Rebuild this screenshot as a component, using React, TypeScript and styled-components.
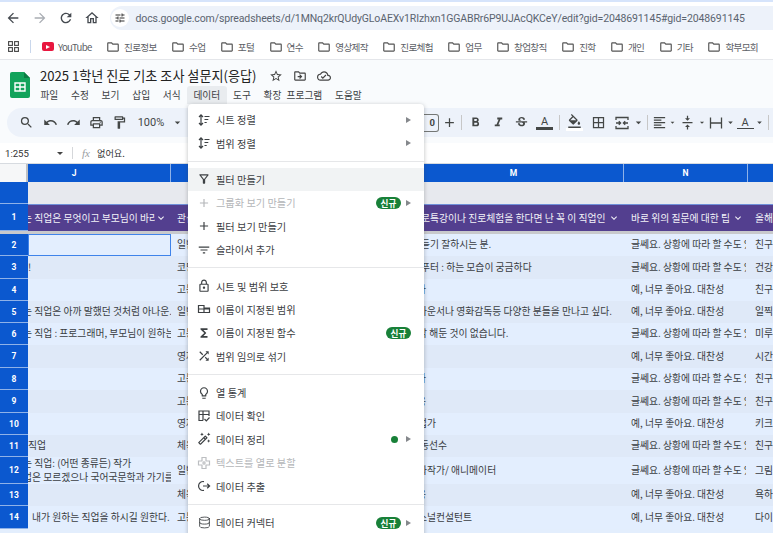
import React from 'react';
import styled, { createGlobalStyle } from 'styled-components';
import {
  MdArrowBack, MdArrowForward, MdRefresh, MdOutlineHome, MdOutlineFolder, MdStarBorder, MdOutlineDriveFileMove,
  MdOutlineCloudDone, MdSearch, MdUndo, MdRedo, MdOutlineLocalPrintshop, MdOutlineFormatPaint, MdAdd, MdFormatBold,
  MdFormatItalic, MdStrikethroughS, MdOutlineFormatColorFill, MdBorderAll, MdFormatAlignLeft,
  MdVerticalAlignCenter, MdOutlineFilterAlt, MdFilterList, MdOutlineLock, MdFunctions, MdShuffle, MdOutlineLightbulb,
  MdOutlineAutoFixHigh, MdKeyboardArrowDown, MdOutlineTune, MdArrowDropDown,
} from 'react-icons/md';
import { Database } from 'lucide-react';

const FONT = `"Noto Sans CJK KR", "Noto Sans", sans-serif`;

const GlobalStyle = createGlobalStyle`
  html, body { margin: 0; padding: 0; background: #fff; }
  body { font-family: ${FONT}; }
`;

const Page = styled.div`
  position: relative;
  display: flex;
  flex-direction: column;
  width: 773px;
  height: 533px;
  overflow: hidden;
  background: #fff;
`;

/* browser chrome */
const TabStrip = styled.div`
  flex: none;
  height: 2px;
  background: #d6e4fb;
`;

const AddressRow = styled.div`
  display: flex;
  flex: none;
  align-items: center;
  height: 32px;
`;

const NavButton = styled.div<{ $dim?: boolean }>`
  display: flex;
  flex: none;
  align-items: center;
  justify-content: center;
  width: 26.4px;
  font-size: 16px;
  color: ${p => (p.$dim ? '#a9adb3' : '#454a50')};
`;

const AddressBar = styled.div`
  display: flex;
  align-items: center;
  flex: 1;
  min-width: 0;
  height: 24px;
  margin-left: 4px;
  border-radius: 12px 0 0 12px;
  background: #edf2fa;
`;

const SiteChip = styled.div`
  display: flex;
  flex: none;
  align-items: center;
  justify-content: center;
  width: 18px;
  height: 18px;
  margin: 0 7px 0 1px;
  border-radius: 50%;
  background: #fff;
  font-size: 12px;
  color: #333;
`;

const Url = styled.div`
  font: 10.5px "Roboto", sans-serif;
  letter-spacing: -0.12px;
  color: #5b6470;
  white-space: nowrap;
`;

const BookmarkBar = styled.div`
  display: flex;
  flex: none;
  align-items: center;
  box-sizing: border-box;
  height: 26px;
  padding-left: 8px;
  border-bottom: 1px solid #e4e6ea;
`;

const AppsIcon = styled.svg`
  flex: none;
  width: 11px;
  height: 11px;
  margin-right: 11px;
`;

const BarDivider = styled.div`
  flex: none;
  width: 1px;
  height: 13px;
  margin-right: 11px;
  background: #c9d7ec;
`;

const Bookmark = styled.div`
  display: flex;
  flex: none;
  align-items: center;
  gap: 4px;
  margin-right: 14.5px;
  font-size: 9.6px;
  letter-spacing: -0.7px;
  color: #5c6066;
  white-space: nowrap;

  svg { font-size: 14px; color: #555; }
`;

const YouTubeBadge = styled.div`
  display: flex;
  align-items: center;
  justify-content: center;
  width: 12px;
  height: 9px;
  border-radius: 2px;
  background: #e8173f;

  &::after {
    content: '';
    border-left: 4px solid #fff;
    border-top: 2.5px solid transparent;
    border-bottom: 2.5px solid transparent;
  }
`;

/* sheets header */
const DocHeader = styled.div`
  display: flex;
  flex: none;
  flex-direction: column;
  background: #f9fbfd;
`;

const TitleArea = styled.div`
  display: flex;
  box-sizing: border-box;
  height: 44px;
  padding: 5px 0 0 10px;
`;

const SheetLogo = styled.svg`
  flex: none;
  width: 20px;
  height: 26px;
  margin: 7px 10px 0 0;
`;

const TitleStack = styled.div`
  display: flex;
  flex-direction: column;
`;

const TitleRow = styled.div`
  display: flex;
  align-items: center;
  height: 21px;
`;

const Title = styled.div`
  width: 229px;
  font-size: 13.1px;
  line-height: 20px;
  color: #222;
  white-space: nowrap;
`;

const TitleIcons = styled.div`
  display: flex;
  gap: 10px;
  font-size: 14px;
  color: #444;
  svg { display: block; }
`;

const MenuBar = styled.div`
  display: flex;
  height: 18px;
  margin-left: -6px;
`;

const MenuLabel = styled.div<{ $open?: boolean }>`
  padding: 0 6.4px;
  border-radius: 3px 3px 0 0;
  font-size: 9.7px;
  line-height: 18px;
  word-spacing: 3px;
  color: #3c4043;
  white-space: nowrap;
  background: ${p => (p.$open ? '#e9ecef' : 'transparent')};
`;

const ToolbarWrap = styled.div`
  padding: 4px 0 6px 7px;
`;

const Toolbar = styled.div`
  display: flex;
  align-items: center;
  height: 29px;
  padding-left: 7px;
  border-radius: 15px 0 0 15px;
  background: #edf2fa;
  color: #444746;
`;

const Tool = styled.div<{ $w?: number }>`
  display: flex;
  flex: none;
  align-items: center;
  justify-content: center;
  width: ${p => p.$w ?? 23}px;
  height: 22px;
  font-size: 15px;
`;

const ToolText = styled(Tool)`
  font: 11px "Roboto", sans-serif;
`;

const Caret = styled(Tool)`
  width: ${p => p.$w ?? 13}px;
  font-size: 13px;
`;

const ToolSep = styled.div<{ $mx?: number }>`
  flex: none;
  width: 1px;
  height: 15px;
  margin: 0 ${p => p.$mx ?? 3}px;
  background: #c7c7c7;
`;

const HiddenStretch = styled.div`
  flex: none;
  width: 237px;
`;

const FontSizeBox = styled.div`
  display: flex;
  flex: none;
  align-items: center;
  justify-content: flex-end;
  width: 14px;
  height: 16px;
  padding-right: 3px;
  border: 1px solid #747775;
  border-left: 0;
  border-radius: 0 3px 3px 0;
  font: bold 9.5px "Roboto", sans-serif;
`;

const ColorTool = styled(Tool)`
  flex-direction: column;
`;

const ColorBar = styled.div<{ $c: string; $h?: number }>`
  width: 17px;
  height: ${p => p.$h ?? 3}px;
  margin-top: -1px;
  background: ${p => p.$c};
`;

const LetterA = styled.div`
  font: 11px/12px "Roboto", sans-serif;
`;

/* formula bar */
const FormulaBar = styled.div`
  display: flex;
  flex: none;
  align-items: center;
  box-sizing: border-box;
  height: 21px;
  background: #fff;
  border-bottom: 1px solid #d7dbe0;
  font-size: 9.2px;
  color: #333;
`;

const NameBox = styled.div`
  display: flex;
  align-items: center;
  justify-content: space-between;
  box-sizing: border-box;
  width: 72px;
  padding: 0 9px 0 5px;
  font: 9.6px "Roboto", sans-serif;
`;

const NameCaret = styled.div`
  border-top: 3px solid #444;
  border-left: 3px solid transparent;
  border-right: 3px solid transparent;
`;

const FormulaDivider = styled.div`
  width: 1px;
  height: 12px;
  background: #d5d7da;
`;

const Fx = styled.div`
  margin: 0 7px 0 9px;
  font: italic 11px "Liberation Serif", serif;
  color: #9a9da1;
`;

/* grid */
const Sheet = styled.div`
  display: flex;
  flex: 1;
  flex-direction: column;
  min-height: 0;
  background: #e3eefd;
`;

const COLS = '28px 143px 117px 116px 220px 124px 120px';

const SheetRow = styled.div<{ $h: number; $even?: boolean }>`
  display: grid;
  flex: none;
  grid-template-columns: ${COLS};
  height: ${p => p.$h}px;
  background: ${p => (p.$even ? '#dfe9f8' : '#e3eefe')};
`;

const Corner = styled.div`
  box-sizing: border-box;
  background: #f6f7f8;
  border-right: 2px solid #bfc1c4;
`;

// J is scrolled partly under the frozen row headers, so its letter sits left of the visible centre
const ColHead = styled.div<{ $scrolled?: number }>`
  display: flex;
  align-items: center;
  justify-content: center;
  padding-right: ${p => p.$scrolled ?? 0}px;
  border-right: 1px solid #8fb2e8;
  background: #0b58cf;
  font: bold 8.5px "Roboto", sans-serif;
  color: #fff;
`;

const RowHead = styled.div`
  display: flex;
  align-items: center;
  justify-content: center;
  box-sizing: border-box;
  border-bottom: 1px solid #8fb2e8;
  background: #0b58cf;
  font: bold 8.5px "Roboto", sans-serif;
  color: #fff;
`;

const BlankBand = styled.div`
  grid-column: 2 / -1;
  background: #e7e9ee;
`;

const FreezeLine = styled.div`
  flex: none;
  height: 3px;
  background: #c8c9cc;
`;

const HeadCell = styled.div`
  display: flex;
  align-items: center;
  justify-content: space-between;
  min-width: 0;
  padding-right: 4px;
  background: #533f8f;
  border-top: 1px solid #6f8fd8;
  font-size: 9.8px;
  color: #f2f2f8;
  overflow: hidden;

  svg { flex: none; font-size: 12px; }
`;

const HeadClip = styled.div`
  flex: 1;
  min-width: 0;
  overflow: hidden;
  white-space: nowrap;
`;

const CellText = styled.div<{ $indent?: number }>`
  margin-left: ${p => p.$indent ?? 6}px;
`;

const TipText = styled(CellText)`
  width: 115px;
  overflow: hidden;
`;

const Cell = styled.div<{ $selected?: boolean }>`
  display: flex;
  flex-direction: column;
  justify-content: center;
  box-sizing: border-box;
  min-width: 0;
  overflow: hidden;
  font-size: 9.8px;
  line-height: 13.5px;
  color: #3a3d42;
  white-space: nowrap;
  ${p => (p.$selected ? 'border: 1px solid #3f83ea; border-right-width: 1.5px; border-bottom-width: 1.5px;' : '')}
`;

/* data menu */
const Menu = styled.div`
  position: absolute;
  top: 104px;
  left: 188px;
  width: 236px;
  padding: 4px 0;
  border-radius: 4px 4px 0 0;
  background: #fff;
  box-shadow: 0 1px 4px rgba(60, 64, 67, 0.35);
`;

const MenuItem = styled.div<{ $hover?: boolean; $off?: boolean }>`
  display: flex;
  align-items: center;
  height: 23.4px;
  padding: 0 13px 0 9px;
  font-size: 10.2px;
  color: ${p => (p.$off ? '#b4b6b9' : '#3c4043')};
  background: ${p => (p.$hover ? '#f1f3f4' : 'transparent')};
  white-space: nowrap;
`;

const MenuIcon = styled.div`
  display: flex;
  flex: none;
  align-items: center;
  justify-content: center;
  width: 14px;
  height: 14px;
  margin-right: 5px;
  font-size: 14px;
`;

const Trailing = styled.div`
  display: flex;
  align-items: center;
  gap: 5px;
  margin-left: auto;
`;

const NewBadge = styled.div`
  width: 25px;
  height: 12px;
  border-radius: 6px;
  background: #188038;
  font-size: 8.6px;
  font-weight: 700;
  line-height: 12px;
  text-align: center;
  color: #fff;
`;

const GreenDot = styled.div`
  width: 7px;
  height: 7px;
  margin-right: 3px;
  border-radius: 50%;
  background: #188038;
`;

const SubArrow = styled.div`
  border-left: 5px solid #85888c;
  border-top: 3px solid transparent;
  border-bottom: 3px solid transparent;
`;

const MenuSep = styled.div`
  height: 1px;
  margin: 6px 0;
  background: #e6e7e9;
`;

const SortIcon = () => (
  <svg width="14" height="14" viewBox="0 0 14 14" fill="none" stroke="#3c4043" strokeWidth="1.2">
    <path d="M4 2v10M2 4l2-2.2L6 4M2 10l2 2.2L6 10" />
    <path d="M7.5 3.5h5M7.5 6.5h3.8M7.5 9.5h2.2" />
  </svg>
);

const NamedRangeIcon = () => (
  <svg width="14" height="14" viewBox="0 0 14 14" fill="none" stroke="#3c4043" strokeWidth="1.2">
    <path d="M1.5 3.5h5.5v7H1.5zM7 6h5.5v4.5H7zM1.5 7h11" />
  </svg>
);

const ValidationIcon = () => (
  <svg width="14" height="14" viewBox="0 0 14 14" fill="none" stroke="#3c4043" strokeWidth="1.2">
    <path d="M6 11.5H2V2h10v5M2 5.5h10M6 2v9.5" />
    <path d="M7.5 10l1.8 1.8 3.2-3.3" />
  </svg>
);

const SplitIcon = () => (
  <svg width="14" height="14" viewBox="0 0 14 14" fill="none" stroke="#bcbec1" strokeWidth="1.2">
    <path d="M5 1.5h4v3.5h3.5v4H9v3.5H5V9H1.5V5H5z" />
    <path d="M7 5v4M5 7h4" />
  </svg>
);

const ExtractIcon = () => (
  <svg width="14" height="14" viewBox="0 0 14 14" fill="none" stroke="#3c4043" strokeWidth="1.2">
    <path d="M7 2.6A4.5 4.5 0 1 0 7 11.4" />
    <path d="M6 7h6.5M10.2 4.8L12.6 7l-2.4 2.2" />
  </svg>
);

const MergeIcon = () => (
  <svg width="16" height="16" viewBox="0 0 16 16" fill="none" stroke="#444746" strokeWidth="1.3">
    <path d="M2 5V2.5h12V5M2 11v2.5h12V11" />
    <path d="M2 8h4.5M4.8 6.2L6.6 8 4.8 9.8M14 8H9.5M11.2 6.2L9.4 8l1.8 1.8" />
  </svg>
);

const WrapIcon = () => (
  <svg width="16" height="16" viewBox="0 0 16 16" fill="none" stroke="#444746" strokeWidth="1.3">
    <path d="M2.5 2.5v11M13.5 2.5v11M2.5 8h11" />
  </svg>
);

const PlusIcon = () => <MdAdd />;

const folders = ['진로정보', '수업', '포털', '연수', '영상제작', '진로체험', '업무', '창업창직', '진학', '개인', '기타', '학부모회'];
const menus = ['파일', '수정', '보기', '삽입', '서식'];
const menusAfter = ['도구', '확장 프로그램', '도움말'];

const MAYBE = '글쎄요. 상황에 따라 할 수도 있고';
const YES = '예, 너무 좋아요. 대찬성';

interface RowData {
  n: number;
  h: number;
  j?: string[];
  jIndent?: number;
  k: string;
  m?: string;
  mIndent?: number;
  tip: string;
  o: string;
}

const rows: RowData[] = [
  { n: 2, h: 22, k: '일반', m: '듣기 잘하시는 분.', mIndent: 17, tip: MAYBE, o: '친구들과' },
  { n: 3, h: 23, j: ['!'], jIndent: 0, k: '코딩', m: '푸터 : 하는 모습이 궁금하다', mIndent: 17, tip: MAYBE, o: '건강하게' },
  { n: 4, h: 22, k: '고등', m: '가', mIndent: 13, tip: YES, o: '친구들과' },
  { n: 5, h: 22, j: ['는 직업은 아까 말했던 것처럼 아나운.'], jIndent: -5, k: '일반', m: '나운서나 영화감독등 다양한 분들을 만나고 싶다.', mIndent: 14, tip: YES, o: '일찍 일어나기' },
  { n: 6, h: 22, j: ['는 직업 : 프로그래머, 부모님이 원하는 직업'], jIndent: -5, k: '고등', m: '각 해둔 것이 없습니다.', mIndent: 14, tip: MAYBE, o: '미루지 않기' },
  { n: 7, h: 23, k: '영재', tip: YES, o: '시간 관리' },
  { n: 8, h: 22, k: '고등', m: '사', mIndent: 13, tip: MAYBE, o: '친구들과' },
  { n: 9, h: 23, k: '고등', m: '용', mIndent: 13, tip: MAYBE, o: '친구들과' },
  { n: 10, h: 22, k: '영재', m: '업가', mIndent: 14, tip: YES, o: '키크기' },
  { n: 11, h: 22, j: ['직업'], jIndent: 0, k: '체육', m: '동선수', mIndent: 16, tip: MAYBE, o: '친구들과' },
  {
    n: 12,
    h: 27,
    j: ['는 직업: (어떤 종류든) 작가', '업은 모르겠으나 국어국문학과 가기를'],
    jIndent: -5,
    k: '일반',
    m: '화작가/ 애니메이터',
    mIndent: 14,
    tip: MAYBE,
    o: '그림 그리기',
  },
  { n: 13, h: 22, k: '체육', m: '용', mIndent: 13, tip: YES, o: '욕하지 않기' },
  { n: 14, h: 23, j: ['내가 원하는 직업을 하시길 원한다.'], jIndent: 4, k: '고등', m: '스널컨설턴트', mIndent: 14, tip: YES, o: '다이어트' },
];

export default function App() {
  return (
    <Page>
      <GlobalStyle />
      <TabStrip />
      <AddressRow>
        <NavButton><MdArrowBack /></NavButton>
        <NavButton $dim><MdArrowForward /></NavButton>
        <NavButton><MdRefresh /></NavButton>
        <NavButton><MdOutlineHome /></NavButton>
        <AddressBar>
          <SiteChip><MdOutlineTune /></SiteChip>
          <Url>docs.google.com/spreadsheets/d/1MNq2krQUdyGLoAEXv1RIzhxn1GGABRr6P9UJAcQKCeY/edit?gid=2048691145#gid=2048691145</Url>
        </AddressBar>
      </AddressRow>
      <BookmarkBar>
        <AppsIcon viewBox="0 0 11 11" fill="none" stroke="#444" strokeWidth="1.1">
          <rect x="0.6" y="0.6" width="3.8" height="3.8" />
          <rect x="6.6" y="0.6" width="3.8" height="3.8" />
          <rect x="0.6" y="6.6" width="3.8" height="3.8" />
          <rect x="6.6" y="6.6" width="3.8" height="3.8" />
        </AppsIcon>
        <BarDivider />
        <Bookmark><YouTubeBadge />YouTube</Bookmark>
        {folders.map(name => (
          <Bookmark key={name}><MdOutlineFolder />{name}</Bookmark>
        ))}
      </BookmarkBar>

      <DocHeader>
        <TitleArea>
          <SheetLogo viewBox="0 0 20 26">
            <path d="M2 0h12l6 6v18a2 2 0 0 1-2 2H2a2 2 0 0 1-2-2V2a2 2 0 0 1 2-2z" fill="#12a35b" />
            <path d="M14 0l6 6h-6z" fill="#0c7c43" />
            <path d="M5 11h10v8H5zM5 15h10M10 11v8" fill="none" stroke="#fff" strokeWidth="1.4" />
          </SheetLogo>
          <TitleStack>
            <TitleRow>
              <Title>2025 1학년 진로 기초 조사 설문지(응답)</Title>
              <TitleIcons>
                <MdStarBorder />
                <MdOutlineDriveFileMove />
                <MdOutlineCloudDone />
              </TitleIcons>
            </TitleRow>
            <MenuBar>
              {menus.map(m => <MenuLabel key={m}>{m}</MenuLabel>)}
              <MenuLabel $open>데이터</MenuLabel>
              {menusAfter.map(m => <MenuLabel key={m}>{m}</MenuLabel>)}
            </MenuBar>
          </TitleStack>
        </TitleArea>
        <ToolbarWrap>
          <Toolbar>
            <Tool $w={25}><MdSearch /></Tool>
            <Tool><MdUndo /></Tool>
            <Tool><MdRedo /></Tool>
            <Tool><MdOutlineLocalPrintshop /></Tool>
            <Tool><MdOutlineFormatPaint /></Tool>
            <ToolText $w={40}>100%</ToolText>
            <Caret><MdArrowDropDown /></Caret>
            <HiddenStretch />
            <FontSizeBox>0</FontSizeBox>
            <Tool $w={20}><MdAdd /></Tool>
            <ToolSep $mx={2} />
            <Tool><MdFormatBold /></Tool>
            <Tool><MdFormatItalic /></Tool>
            <Tool><MdStrikethroughS /></Tool>
            <ColorTool><LetterA>A</LetterA><ColorBar $c="#444746" /></ColorTool>
            <ToolSep />
            <ColorTool><MdOutlineFormatColorFill /><ColorBar $c="#ffffff" /></ColorTool>
            <Tool $w={25}><MdBorderAll /></Tool>
            <Tool $w={21}><MergeIcon /></Tool>
            <Caret><MdArrowDropDown /></Caret>
            <ToolSep $mx={2} />
            <Tool $w={18}><MdFormatAlignLeft /></Tool>
            <Caret $w={9}><MdArrowDropDown /></Caret>
            <Tool $w={20}><MdVerticalAlignCenter /></Tool>
            <Caret $w={10}><MdArrowDropDown /></Caret>
            <Tool $w={18}><WrapIcon /></Tool>
            <Caret $w={11}><MdArrowDropDown /></Caret>
            <ColorTool $w={18}><LetterA>A</LetterA><ColorBar $c="#444746" $h={1} /></ColorTool>
            <Caret $w={11}><MdArrowDropDown /></Caret>
            <ToolSep />
          </Toolbar>
        </ToolbarWrap>
      </DocHeader>

      <FormulaBar>
        <NameBox>1:255<NameCaret /></NameBox>
        <FormulaDivider />
        <Fx>fx</Fx>
        없어요.
      </FormulaBar>

      <Sheet>
        <SheetRow $h={18}>
          <Corner />
          <ColHead $scrolled={50}>J</ColHead>
          <ColHead>K</ColHead>
          <ColHead>L</ColHead>
          <ColHead>M</ColHead>
          <ColHead>N</ColHead>
          <ColHead>O</ColHead>
        </SheetRow>
        <SheetRow $h={22}>
          <RowHead />
          <BlankBand />
        </SheetRow>
        <SheetRow $h={27}>
          <RowHead>1</RowHead>
          <HeadCell><HeadClip><CellText $indent={-5}>는 직업은 무엇이고 부모님이 바라</CellText></HeadClip><MdKeyboardArrowDown /></HeadCell>
          <HeadCell><HeadClip><CellText>관심 분야</CellText></HeadClip></HeadCell>
          <HeadCell />
          <HeadCell><HeadClip><CellText $indent={17}>로특강이나 진로체험을 한다면 난 꼭 이 직업인</CellText></HeadClip><MdKeyboardArrowDown /></HeadCell>
          <HeadCell><HeadClip><CellText $indent={7}>바로 위의 질문에 대한 팁</CellText></HeadClip><MdKeyboardArrowDown /></HeadCell>
          <HeadCell><HeadClip><CellText $indent={7}>올해 목표</CellText></HeadClip></HeadCell>
        </SheetRow>
        <FreezeLine />
        {rows.map((r, i) => (
          <SheetRow key={r.n} $h={r.h} $even={i % 2 === 1}>
            <RowHead>{r.n}</RowHead>
            <Cell $selected={r.n === 2}>
              {r.j?.map(line => <CellText key={line} $indent={r.jIndent}>{line}</CellText>)}
            </Cell>
            <Cell><CellText>{r.k}</CellText></Cell>
            <Cell />
            <Cell><CellText $indent={r.mIndent}>{r.m}</CellText></Cell>
            <Cell><TipText $indent={7}>{r.tip}</TipText></Cell>
            <Cell><CellText $indent={7}>{r.o}</CellText></Cell>
          </SheetRow>
        ))}
      </Sheet>

      <Menu>
        <MenuItem><MenuIcon><SortIcon /></MenuIcon>시트 정렬<Trailing><SubArrow /></Trailing></MenuItem>
        <MenuItem><MenuIcon><SortIcon /></MenuIcon>범위 정렬<Trailing><SubArrow /></Trailing></MenuItem>
        <MenuSep />
        <MenuItem $hover><MenuIcon><MdOutlineFilterAlt /></MenuIcon>필터 만들기</MenuItem>
        <MenuItem $off><MenuIcon><PlusIcon /></MenuIcon>그룹화 보기 만들기<Trailing><NewBadge>신규</NewBadge><SubArrow /></Trailing></MenuItem>
        <MenuItem><MenuIcon><PlusIcon /></MenuIcon>필터 보기 만들기</MenuItem>
        <MenuItem><MenuIcon><MdFilterList /></MenuIcon>슬라이서 추가</MenuItem>
        <MenuSep />
        <MenuItem><MenuIcon><MdOutlineLock /></MenuIcon>시트 및 범위 보호</MenuItem>
        <MenuItem><MenuIcon><NamedRangeIcon /></MenuIcon>이름이 지정된 범위</MenuItem>
        <MenuItem><MenuIcon><MdFunctions /></MenuIcon>이름이 지정된 함수<Trailing><NewBadge>신규</NewBadge></Trailing></MenuItem>
        <MenuItem><MenuIcon><MdShuffle /></MenuIcon>범위 임의로 섞기</MenuItem>
        <MenuSep />
        <MenuItem><MenuIcon><MdOutlineLightbulb /></MenuIcon>열 통계</MenuItem>
        <MenuItem><MenuIcon><ValidationIcon /></MenuIcon>데이터 확인</MenuItem>
        <MenuItem><MenuIcon><MdOutlineAutoFixHigh /></MenuIcon>데이터 정리<Trailing><GreenDot /><SubArrow /></Trailing></MenuItem>
        <MenuItem $off><MenuIcon><SplitIcon /></MenuIcon>텍스트를 열로 분할</MenuItem>
        <MenuItem><MenuIcon><ExtractIcon /></MenuIcon>데이터 추출</MenuItem>
        <MenuSep />
        <MenuItem><MenuIcon><Database size={13} strokeWidth={1.6} /></MenuIcon>데이터 커넥터<Trailing><NewBadge>신규</NewBadge><SubArrow /></Trailing></MenuItem>
      </Menu>
    </Page>
  );
}
